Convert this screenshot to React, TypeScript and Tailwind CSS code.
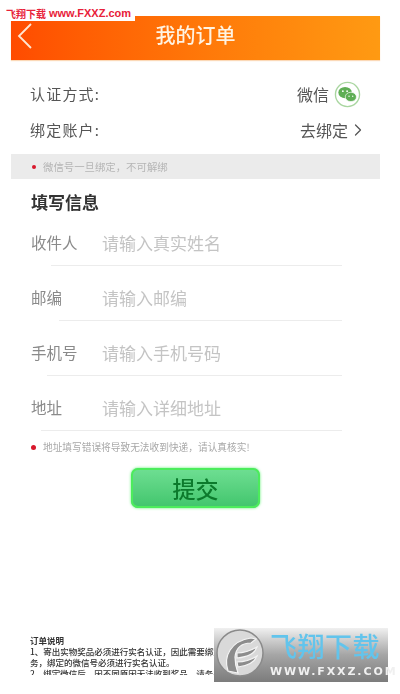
import { ChevronRight } from "lucide-react";

const cjk = "font-['Noto_Sans_CJK_SC','Noto_Sans',sans-serif]";

const fields = [
  { label: "收件人", hint: "请输入真实姓名", line: "ml-[40px]" },
  { label: "邮编", hint: "请输入邮编", line: "ml-[48px]" },
  { label: "手机号", hint: "请输入手机号码", line: "ml-[36px]" },
  { label: "地址", hint: "请输入详细地址", line: "ml-[30px]" },
];

function WechatIcon() {
  return (
    <svg width="27" height="27" viewBox="0 0 28 28" className="ml-[5px]">
      <circle cx="14" cy="14" r="12.5" fill="#fff" stroke="#a9d6a0" strokeWidth="1.4" />
      <ellipse cx="11.5" cy="12" rx="7" ry="5.8" fill="#5fae55" />
      <ellipse cx="17.5" cy="16.5" rx="5.8" ry="4.8" fill="#5fae55" stroke="#fff" strokeWidth="0.7" />
      <circle cx="9.2" cy="10.6" r="0.9" fill="#fff" />
      <circle cx="13.6" cy="10.6" r="0.9" fill="#fff" />
      <circle cx="15.6" cy="15.8" r="0.7" fill="#fff" />
      <circle cx="19.4" cy="15.8" r="0.7" fill="#fff" />
    </svg>
  );
}

function FxxzLogo() {
  return (
    <div className="absolute left-[214px] top-[628px] flex h-[54px] w-[174px] items-start bg-gradient-to-b from-[#f0f0f0] via-[#a5a5a5] to-[#7c7c7c] blur-[0.5px]">
      <svg width="54" height="54" viewBox="0 0 54 54" className="shrink-0">
        <circle cx="26" cy="25" r="23" fill="#d9d9d9" stroke="#8a8a8a" strokeWidth="1.5" />
        <path
          d="M14 43C9 28 17 13 37 10L42 11L37 15C27 15 22 20 21 29C21 35 22 40 24 45Z"
          fill="#8c8c8c"
          stroke="#f4f4f4"
          strokeWidth="1.2"
        />
        <path d="M23 25C30 25 36 23 43 19C41 25 34 29 23 30Z" fill="#8c8c8c" stroke="#f4f4f4" strokeWidth="1.2" />
        <path d="M23 34C30 34 37 32 43 28C40 35 33 38 24 39Z" fill="#8c8c8c" stroke="#f4f4f4" strokeWidth="1.2" />
      </svg>
      <div className="ml-[2px] flex flex-col items-start pt-[3px]">
        <span className="text-[27px] leading-[30px] font-medium tracking-[0.5px] text-[#62c4ec]">飞翔下载</span>
        <span className="mt-[4px] font-['DejaVu_Sans',sans-serif] text-[11px] leading-[14px] font-bold tracking-[1.9px] text-[#f0f0f0]">
          WWW.FXXZ.COM
        </span>
      </div>
    </div>
  );
}

export default function App() {
  return (
    <div className={`relative h-[694px] w-[400px] overflow-hidden bg-white ${cjk}`}>
      <div className="ml-[11px] w-[369px] pt-[16px] blur-[0.45px]">
        {/* Header */}
        <div className="relative flex h-[44px] items-center justify-center bg-gradient-to-r from-[#ff4b00] to-[#ff9a12] pb-[6px] shadow-[0_1px_1px_#fbd9b8]">
          <svg width="16" height="28" viewBox="0 0 16 28" fill="none" className="absolute left-[6px] top-[6px]">
            <path d="M14 2L2 14L14 26" stroke="#ffe6d2" strokeWidth="1.8" />
          </svg>
          <span className="text-[20px] leading-none font-medium text-[#fff3e2]">我的订单</span>
        </div>

        {/* Account */}
        <div className="mt-[16px] flex h-[36px] items-center justify-between px-[19px] text-[#555]">
          <span className="text-[15px] tracking-[1.2px]">认证方式:</span>
          <div className="flex items-center text-[16px]">
            微信
            <WechatIcon />
          </div>
        </div>
        <div className="flex h-[36px] items-center justify-between pl-[19px] pr-[15px] text-[#555]">
          <span className="text-[15px] tracking-[1.2px]">绑定账户:</span>
          <div className="flex items-center text-[16px]">
            去绑定
            <ChevronRight size={20} strokeWidth={1.5} className="-mr-[3px]" />
          </div>
        </div>

        {/* Bind notice */}
        <div className="mt-[6px] flex h-[25px] items-center bg-[#ebebeb] pl-[21px] text-[10.4px] text-[#b5b5b5]">
          <span className="mr-[7px] size-[4px] rounded-full bg-[#d8182c]" />
          微信号一旦绑定，不可解绑
        </div>

        {/* Form */}
        <h2 className="mt-[10px] pl-[20px] text-[17px] leading-[26px] font-bold text-[#333]">填写信息</h2>
        <div className="-mt-[4px]">
          {fields.map((f) => (
            <div key={f.label}>
              <div className="flex h-[54px] items-center pl-[20px] pt-[10px]">
                <span className="w-[71px] text-[15.5px] text-[#8a8a8a]">{f.label}</span>
                <span className="text-[17px] text-[#c4c4c4]">{f.hint}</span>
              </div>
              <div className={`${f.line} mr-[38px] h-px bg-[#ececec]`} />
            </div>
          ))}
        </div>

        {/* Address notice */}
        <div className="mt-[9px] flex h-[14px] items-center pl-[20px] text-[9.7px] text-[#a8a8a8]">
          <span className="mr-[7px] size-[5px] rounded-full bg-[#d8182c]" />
          地址填写错误将导致无法收到快递，请认真核实!
        </div>

        {/* Submit */}
        <div className="mt-[14px] flex justify-center">
          <button className="flex h-[40px] w-[129px] items-center justify-center rounded-[7px] bg-gradient-to-b from-[#6fdf93] to-[#3fc56c] text-[23px] font-medium text-[#0c7a2c] shadow-[inset_0_0_0_2px_#4cec5c,0_0_3px_#5cf070]">
            提交
          </button>
        </div>

        {/* Order notes, runs off the bottom of the page */}
        <div className="mt-[127px] h-[40px] overflow-hidden pl-[19px] text-[8.5px] leading-[11px] font-medium text-[#333]">
          <p className="font-bold">订单说明</p>
          <p>
            1、寄出实物奖品必须进行实名认证，因此需要绑定微信号才能为您提供实物奖品邮寄服
            <br />
            务，绑定的微信号必须进行实名认证。
          </p>
          <p>2、绑定微信后，因不同原因无法收到奖品，请务必填写真实有效的信息。</p>
        </div>
      </div>

      {/* Site watermarks */}
      <div className="absolute left-0 top-[6px] flex h-[15px] w-[135px] items-center bg-white pl-[6px] text-[10px] leading-none font-bold whitespace-nowrap text-[#e8213a]">
        飞翔下载 <span className="ml-[3px] font-['Liberation_Sans',sans-serif] text-[11px]">www.FXXZ.com</span>
      </div>
      <FxxzLogo />
    </div>
  );
}
